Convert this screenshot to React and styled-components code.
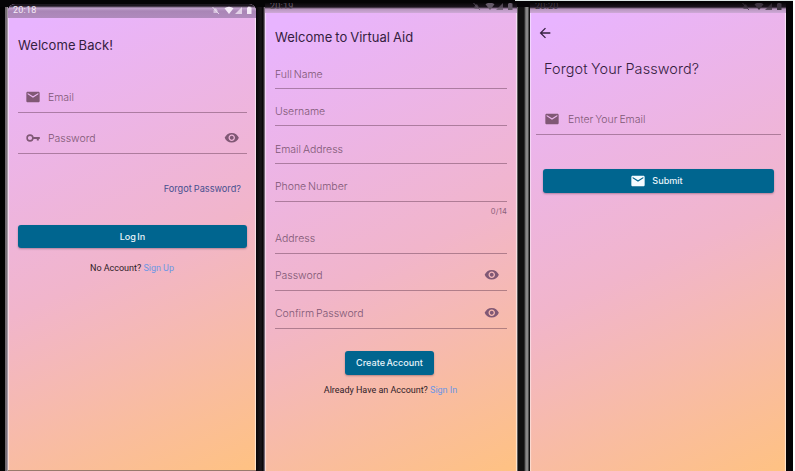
import React from 'react';
import styled, { createGlobalStyle, css } from 'styled-components';

const Global = createGlobalStyle`
  * { box-sizing: border-box; }
  html, body { margin: 0; background: #fff; }
  body { font-family: Inter, "Noto Sans", sans-serif; overflow: hidden; }
`;

const Board = styled.main`
  width: 793px;
  height: 471px;
  background: linear-gradient(#dfe8e6, #dfe8e6) 515px 0 / 278px 1px no-repeat #050406;
  display: grid;
  grid-template-columns: 8px 248px 9px 252px 13px 256px;
  overflow: hidden;
`;

const Bezel = styled.div`
  margin-top: 7px;
  background: ${p => p.$fill};
`;

const Screen = styled.section`
  display: flex;
  flex-direction: column;
  height: ${p => 471 - p.$top}px;
  margin-top: ${p => p.$top}px;
  padding: 0 ${p => p.$right}px 0 ${p => p.$left}px;
  border-radius: ${p => p.$radius || 0}px ${p => p.$radius || 0}px 0 0;
  background: linear-gradient(155deg, #e8b4ff 5%, #f1b5cb 54%, #ffc27f 102%);
  box-shadow: inset 2px 0 1px -1px #ffffff80, inset -2px 0 1px -1px #fff9;
  overflow: hidden;
  ${p => p.$floor && css`border-bottom: 1px solid #9a7a6c;`}
`;

const StatusBar = styled.header`
  flex: none;
  display: flex;
  align-items: center;
  justify-content: space-between;
  height: ${p => p.$h}px;
  margin: 0 -${p => p.$bleedR}px 0 -${p => p.$bleedL}px;
  padding: 0 2px 0 5px;
  background: ${p => p.$fill};
  color: ${p => p.$ink};
  font: 400 9px/9px Roboto, sans-serif;
  letter-spacing: .2px;
`;

const StatusContent = styled.div`
  flex: 1;
  display: flex;
  align-items: center;
  justify-content: space-between;
  margin-top: -${p => p.$lift}px;
`;

const Title = styled.h1`
  flex: none;
  margin: ${p => p.$mt}px 0 0 ${p => p.$ml || 0}px;
  font-size: ${p => p.$size || 13}px;
  line-height: 18px;
  font-weight: ${p => p.$weight || 400};
  letter-spacing: ${p => p.$ls || 0}px;
  word-spacing: -.8px;
  color: #35203f;
  white-space: nowrap;
`;

const Field = styled.label`
  flex: none;
  display: flex;
  align-items: center;
  height: ${p => p.$h}px;
  margin-top: ${p => p.$mt || 0}px;
  padding: ${p => p.$h - (p.$base || 28)}px 8px 0 ${p => p.$pl || 0}px;
  border-bottom: 1px solid #5c354c70;
  font-size: 10.5px;
  font-weight: 350;
  color: #805875;
  white-space: nowrap;
  ${p => p.$wide && css`margin-left: -7px; margin-right: -7px;`}
`;

const FieldText = styled.span`
  flex: 1;
  margin-left: ${p => p.$ml || 0}px;
  letter-spacing: -.02px;
  word-spacing: -1px;
`;

const Counter = styled.span`
  flex: none;
  margin-top: 4px;
  height: 12px;
  font-size: 7.5px;
  line-height: 12px;
  text-align: right;
  letter-spacing: .2px;
  color: #8b6079;
`;

const ForgotLink = styled.a`
  flex: none;
  margin: 28px 6px 0 0;
  text-align: right;
  font-size: 9.2px;
  line-height: 13px;
  word-spacing: -.5px;
  color: #49508f;
`;

const Button = styled.button`
  flex: none;
  align-self: ${p => (p.$w ? 'center' : 'stretch')};
  position: static;
  width: ${p => (p.$w ? `${p.$w}px` : 'auto')};
  display: flex;
  align-items: center;
  justify-content: center;
  gap: 6px;
  height: ${p => p.$h || 23}px;
  margin: ${p => p.$mt}px ${p => p.$mr || 0}px 0 0;
  padding: 0 ${p => p.$pr || 0}px 0 0;
  border: 0;
  border-radius: 3px;
  background: #00658f;
  color: #e8f4fa;
  font: 500 9.1px/12px Inter, sans-serif;
  word-spacing: -1px;
  box-shadow: 0 1px 2px #55304666;
`;

const Note = styled.p`
  flex: none;
  margin: ${p => p.$mt}px 0 0;
  padding-right: 1px;
  text-align: center;
  font: 400 9px/12px Roboto, sans-serif;
  letter-spacing: -.02px;
  color: #301c28;
  white-space: nowrap;
`;

const NoteLink = styled.a`
  color: #6c96e4;
`;

const Icon = styled.svg`
  flex: none;
  display: block;
  fill: ${p => p.$fill || '#805875'};
`;

const Mail = ({ fill, size = 16 }) => (
  <Icon width={size} height={size} viewBox="0 0 24 24" $fill={fill}>
    <path d="M20 4H4c-1.100 0-2 .9-2 2v12c0 1.100.9 2 2 2h16c1.100 0 2-.9 2-2V6c0-1.100-.9-2-2-2zm0 4-8 5-8-5V6l8 5 8-5v2z" />
  </Icon>
);

const Key = () => (
  <Icon width="16" height="16" viewBox="0 0 16 16">
    <circle cx="5" cy="8" r="2.900" fill="none" stroke="#805875" strokeWidth="1.600" />
    <path d="M7.800 7h7v2h-1v1.600h-2V9h-4z" />
  </Icon>
);

const Eye = () => (
  <Icon width="15.500" height="15.500" viewBox="0 0 24 24">
    <path d="M12 4.500C7 4.500 2.730 7.610 1 12c1.730 4.390 6 7.500 11 7.500s9.270-3.110 11-7.500c-1.730-4.390-6-7.500-11-7.500zM12 17c-2.760 0-5-2.240-5-5s2.240-5 5-5 5 2.240 5 5-2.240 5-5 5zm0-8c-1.660 0-3 1.340-3 3s1.340 3 3 3 3-1.340 3-3-1.340-3-3-3z" />
  </Icon>
);

const BackIcon = styled(Icon)`
  margin: 12px 0 0 -6px;
`;

const Back = () => (
  <BackIcon width="16" height="16" viewBox="0 0 24 24" $fill="#35203f">
    <path d="M20 11H7.830l5.590-5.590L12 4l-8 8 8 8 1.410-1.410L7.830 13H20v-2z" />
  </BackIcon>
);

const Signals = ({ fill }) => (
  <Icon width="44" height="9" viewBox="0 0 44 9" $fill={fill}>
    <path d="M3.500 7V4.500Q5.500 0 7.500 4.500V7z" fillOpacity=".6" />
    <path d="M2.500 1l6.500 7" stroke={fill} strokeWidth=".8" />
    <path d="M14.500 2.200q4.500-3 9 0L19 8z" />
    <path d="M25 8l7-7v7z" fillOpacity=".75" />
    <path d="M37 1.500h1V.8h2.500v.7h1V8H37z" />
  </Icon>
);

const Status = ({ time, h, bleedL, bleedR, fill, ink, lift }) => (
  <StatusBar $h={h} $bleedL={bleedL} $bleedR={bleedR} $fill={fill} $ink={ink}>
    <StatusContent $lift={lift}>
      <span>{time}</span>
      <Signals fill={ink} />
    </StatusContent>
  </StatusBar>
);

const croppedBar = 'linear-gradient(#080608, #1c151e 4px, #b795be 6px, #cfa9d8)';

export default function App() {
  return (
    <>
      <Global />
      <Board>
        <Bezel $fill="linear-gradient(90deg,#020202 5px,#6e686d 5px,#776e76 7px,#d0bfd0 8px)" />
        <Screen $top={4} $left={10} $right={9} $radius={7} $floor>
          <Status time="20:18" h={14} bleedL={10} bleedR={9} lift={1} ink="#f4eaf7"
            fill="linear-gradient(#1d1720 2px,#c3a3cf 4px,#a986b6 7px,#b08abd)" />
          <Title $mt={18} $ls={0.08}>Welcome Back!</Title>
          <Field $mt={28} $h={31} $base={31} $pl={7}><Mail /><FieldText $ml={7}>Email</FieldText></Field>
          <Field $h={41} $base={31} $pl={7}><Key /><FieldText $ml={7}>Password</FieldText><Eye /></Field>
          <ForgotLink>Forgot Password?</ForgotLink>
          <Button $mt={30}>Log In</Button>
          <Note $mt={14}>No Account? <NoteLink>Sign Up</NoteLink></Note>
        </Screen>
        <Bezel $fill="linear-gradient(90deg,#080608,#1b171b 5px,#050405 7px,#9c8a9c)" />
        <Screen $top={3} $left={10} $right={10}>
          <Status time="20:19" h={10} bleedL={10} bleedR={10} lift={3} ink="#655a69" fill={croppedBar} />
          <Title $mt={15} $ls={0.04}>Welcome to Virtual Aid</Title>
          <Field $mt={12} $h={31}><FieldText>Full Name</FieldText></Field>
          <Field $h={37}><FieldText>Username</FieldText></Field>
          <Field $h={38}><FieldText>Email Address</FieldText></Field>
          <Field $h={38} $base={30}><FieldText>Phone Number</FieldText></Field>
          <Counter>0/14</Counter>
          <Field $mt={5} $h={31} $base={30}><FieldText>Address</FieldText></Field>
          <Field $h={37} $base={31}><FieldText>Password</FieldText><Eye /></Field>
          <Field $h={38} $base={31}><FieldText>Confirm Password</FieldText><Eye /></Field>
          <Button $w={89} $h={24} $mt={22} $mr={3}>Create Account</Button>
          <Note $mt={9}>Already Have an Account? <NoteLink>Sign In</NoteLink></Note>
        </Screen>
        <Bezel $fill="linear-gradient(90deg,#aaa 0,#111 1px,#111 7px,#888 9px,#888 11px,#111 12px)" />
        <Screen $top={3} $left={13} $right={12}>
          <Status time="20:20" h={10} bleedL={13} bleedR={12} lift={3} ink="#3d3540" fill={croppedBar} />
          <Back />
          <Title $mt={19} $ml={1} $size={14.4} $weight={350} $ls={0.12}>Forgot Your Password?</Title>
          <Field $wide $mt={21} $h={36} $base={31} $pl={8}><Mail /><FieldText $ml={8}>Enter Your Email</FieldText></Field>
          <Button $mt={34} $h={24} $pr={4}><Mail fill="#f4fbff" />Submit</Button>
        </Screen>
      </Board>
    </>
  );
}
